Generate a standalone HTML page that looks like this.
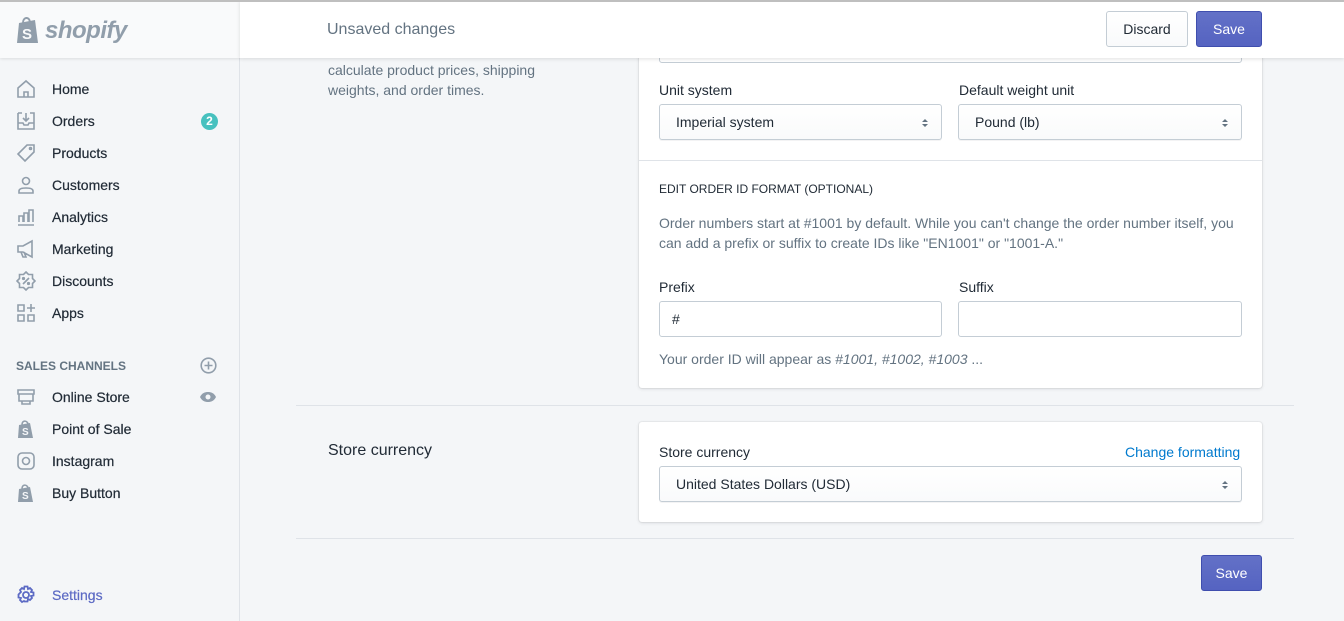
<!DOCTYPE html>
<html><head><meta charset="utf-8"><style>
*{box-sizing:border-box;margin:0;padding:0}
body{width:1344px;height:621px;overflow:hidden;background:#f4f6f8;font-family:"Liberation Sans",sans-serif;font-size:14px;color:#212b36;position:relative}
.a{position:absolute}
.side{left:0;top:0;width:240px;height:621px;background:#f4f6f8;border-right:1px solid #dfe3e8}
.logo{left:0;top:0;width:240px;height:58px;background:#f9fafb;box-shadow:0 1px 3px rgba(0,0,0,.1)}
.nav{left:16px;width:210px;height:32px;display:flex;align-items:center;color:#212b36;-webkit-text-stroke:0.2px #212b36}
.nav svg{width:20px;height:20px;margin-right:16px;flex:none}
.top{left:240px;top:0;width:1104px;height:58px;background:#fff;box-shadow:0 1px 4px rgba(0,0,0,.12);z-index:5}
.btn{height:36px;border-radius:3px;display:flex;align-items:center;justify-content:center;font-size:14px}
.pri{background:linear-gradient(#6371c7,#5563c1);border:1px solid #3f4eae;color:#fff}
.sec{background:linear-gradient(#fff,#f9fafb);border:1px solid #c4cdd5;color:#212b36}
.card{background:#fff;border-radius:3px;box-shadow:0 0 0 1px rgba(63,63,68,.05),0 1px 3px rgba(63,63,68,.15)}
.inp{height:36px;border:1px solid #c4cdd5;border-radius:3px;background:#fff;display:flex;align-items:center;padding-left:12px}
.sel{background:linear-gradient(#fff,#f9fafb);padding-left:16px;box-shadow:0 1px 0 rgba(22,29,37,.05)}
.arr{position:absolute;right:12px;top:12px;width:8px;height:12px}
.muted{color:#637381}
.hr{height:1px;background:#dfe3e8}
</style></head><body>
<div class="a" style="left:0;top:0;width:1344px;height:2px;background:#bfbfbf;z-index:9"></div>
<div class="a side"></div>
<div class="a logo">
<svg class="a" style="left:15px;top:15px" width="27" height="30" viewBox="0 0 27 30"><path d="M4 8 L20 5 L23 28 L2 28 Z" fill="#919eab"/><path d="M8 8 C8 2 14 1 15 7" stroke="#919eab" stroke-width="2" fill="none"/><text x="7" y="24" font-size="15" font-weight="bold" fill="#f9fafb" font-family="Liberation Sans">S</text></svg>
<div class="a" style="left:45px;top:17px;font-size:24px;font-weight:bold;font-style:italic;color:#919eab;letter-spacing:-0.5px">shopify</div>
</div>
<div class="a nav" style="top:73px"><svg viewBox="0 0 20 20" fill="none" stroke="#919eab" stroke-width="1.6"><path d="M2 9L10 2l8 7v9H2z M8 18v-5h4v5"/></svg>Home</div>
<div class="a nav" style="top:105px"><svg viewBox="0 0 20 20" fill="none" stroke="#919eab" stroke-width="1.6"><path d="M2 2h4M14 2h4v16H2V2 M2 12h5l1 2h4l1-2h5 M10 2v8 M7 7l3 3 3-3"/></svg>Orders<span style="margin-left:auto;margin-right:8px;width:17px;height:17px;border-radius:50%;background:#47c1bf;color:#fff;font-size:12px;font-weight:bold;display:flex;align-items:center;justify-content:center;-webkit-text-stroke:0">2</span></div>
<div class="a nav" style="top:137px"><svg viewBox="0 0 20 20" fill="none" stroke="#919eab" stroke-width="1.6"><path d="M11 2h7v7l-9 9-7-7z"/><circle cx="14.5" cy="5.5" r="1"/></svg>Products</div>
<div class="a nav" style="top:169px"><svg viewBox="0 0 20 20" fill="none" stroke="#919eab" stroke-width="1.6"><circle cx="10" cy="6" r="3.5"/><path d="M3 18v-2c0-2 3-3 7-3s7 1 7 3v2z"/></svg>Customers</div>
<div class="a nav" style="top:201px"><svg viewBox="0 0 20 20" fill="none" stroke="#919eab" stroke-width="1.6"><path d="M2 18h16 M3 15V9h4v6 M8 15V6h4v9 M13 15V3h4v12"/></svg>Analytics</div>
<div class="a nav" style="top:233px"><svg viewBox="0 0 20 20" fill="none" stroke="#919eab" stroke-width="1.6"><path d="M2 7h5l9-5v16l-9-5H2z M5 13l2 5h3l-2-5"/></svg>Marketing</div>
<div class="a nav" style="top:265px"><svg viewBox="0 0 20 20" fill="none" stroke="#919eab" stroke-width="1.6"><path d="M10 1l2.5 2.5H16.5V7.5L19 10l-2.5 2.5v4h-4L10 19l-2.5-2.5h-4v-4L1 10l2.5-2.5v-4h4z M7 13l6-6"/><circle cx="7.5" cy="7.5" r=".8"/><circle cx="12.5" cy="12.5" r=".8"/></svg>Discounts</div>
<div class="a nav" style="top:297px"><svg viewBox="0 0 20 20" fill="none" stroke="#919eab" stroke-width="1.6"><path d="M2 2h6v6H2z M2 12h6v6H2z M12 12h6v6h-6z M15 1v8 M11 5h8"/></svg>Apps</div>
<div class="a" style="left:16px;top:359px;font-size:12px;font-weight:bold;color:#637381">SALES CHANNELS</div>
<svg class="a" style="left:200px;top:357px" width="17" height="17" viewBox="0 0 17 17" fill="none" stroke="#919eab" stroke-width="1.6"><circle cx="8.5" cy="8.5" r="7.3"/><path d="M8.5 4.5v8M4.5 8.5h8"/></svg>
<div class="a nav" style="top:381px"><svg viewBox="0 0 20 20" fill="none" stroke="#919eab" stroke-width="1.6"><path d="M2 3h16v4H2z M3 7v7h14V7 M6 14v3h8v-3"/></svg>Online Store<svg style="margin-left:auto;margin-right:9px;width:18px;height:18px" viewBox="0 0 18 18"><path d="M1 9c2-4 5-5 8-5s6 1 8 5c-2 4-5 5-8 5s-6-1-8-5z" fill="#919eab"/><circle cx="9" cy="9" r="2.5" fill="#f4f6f8"/></svg></div>
<div class="a nav" style="top:413px"><svg viewBox="0 0 20 20"><path d="M3 6l11-2 3 15H2z" fill="#919eab"/><path d="M6 6c0-5 5-5 6-1" stroke="#919eab" stroke-width="1.6" fill="none"/><text x="6" y="16" font-size="10" font-weight="bold" fill="#f4f6f8">S</text></svg>Point of Sale</div>
<div class="a nav" style="top:445px"><svg viewBox="0 0 20 20" fill="none" stroke="#919eab" stroke-width="1.6"><rect x="2" y="2" width="16" height="16" rx="4"/><circle cx="10" cy="10" r="3.5"/></svg>Instagram</div>
<div class="a nav" style="top:477px"><svg viewBox="0 0 20 20"><path d="M3 6l11-2 3 15H2z" fill="#919eab"/><path d="M6 6c0-5 5-5 6-1" stroke="#919eab" stroke-width="1.6" fill="none"/><text x="6" y="16" font-size="10" font-weight="bold" fill="#f4f6f8">S</text></svg>Buy Button</div>
<div class="a nav" style="top:579px;color:#5c6ac4;-webkit-text-stroke:0.2px #5c6ac4"><svg viewBox="0 0 20 20" fill="none" stroke="#5c6ac4" stroke-width="1.8"><path d="M8.5 1.5h3l.5 2.5 2-1 2 2-1 2 2.5.5v3l-2.5.5 1 2-2 2-2-1-.5 2.5h-3L8 16l-2 1-2-2 1-2-2.5-.5v-3L5 7 4 5l2-2 2 1z"/><circle cx="10" cy="10" r="3"/></svg>Settings</div>

<div class="a top">
<div class="a" style="left:87px;top:21px;font-size:16px;color:#637381">Unsaved changes</div>
<div class="a btn sec" style="left:866px;top:11px;width:82px">Discard</div>
<div class="a btn pri" style="left:956px;top:11px;width:66px">Save</div>
</div>

<div class="a muted" style="left:328px;top:60px;line-height:20px">calculate product prices, shipping<br>weights, and order times.</div>

<div class="a card" style="left:639px;top:20px;width:623px;height:368px"></div>
<div class="a inp" style="left:659px;top:28px;width:583px;height:35px"></div>
<div class="a" style="left:659px;top:82px">Unit system</div>
<div class="a" style="left:959px;top:82px">Default weight unit</div>
<div class="a inp sel" style="left:659px;top:104px;width:283px">Imperial system<svg class="arr" viewBox="0 0 8 12"><path d="M1 5l3-3 3 3zM1 7l3 3 3-3z" fill="#637381"/></svg></div>
<div class="a inp sel" style="left:958px;top:104px;width:284px">Pound (lb)<svg class="arr" viewBox="0 0 8 12"><path d="M1 5l3-3 3 3zM1 7l3 3 3-3z" fill="#637381"/></svg></div>
<div class="a hr" style="left:639px;top:160px;width:623px"></div>
<div class="a" style="left:659px;top:182px;font-size:12px">EDIT ORDER ID FORMAT (OPTIONAL)</div>
<div class="a muted" style="left:659px;top:213px;line-height:20px;width:590px">Order numbers start at #1001 by default. While you can't change the order number itself, you can add a prefix or suffix to create IDs like "EN1001" or "1001-A."</div>
<div class="a" style="left:659px;top:279px">Prefix</div>
<div class="a" style="left:959px;top:279px">Suffix</div>
<div class="a inp" style="left:659px;top:301px;width:283px">#</div>
<div class="a inp" style="left:958px;top:301px;width:284px"></div>
<div class="a muted" style="left:659px;top:351px">Your order ID will appear as <i>#1001, #1002, #1003</i> ...</div>

<div class="a hr" style="left:296px;top:405px;width:998px"></div>
<div class="a" style="left:328px;top:442px;font-size:16px">Store currency</div>
<div class="a card" style="left:639px;top:422px;width:623px;height:100px"></div>
<div class="a" style="left:659px;top:444px">Store currency</div>
<div class="a" style="left:1125px;top:444px;color:#007ace">Change formatting</div>
<div class="a inp sel" style="left:659px;top:466px;width:583px">United States Dollars (USD)<svg class="arr" viewBox="0 0 8 12"><path d="M1 5l3-3 3 3zM1 7l3 3 3-3z" fill="#637381"/></svg></div>
<div class="a hr" style="left:296px;top:538px;width:998px"></div>
<div class="a btn pri" style="left:1201px;top:555px;width:61px">Save</div>
</body></html>
